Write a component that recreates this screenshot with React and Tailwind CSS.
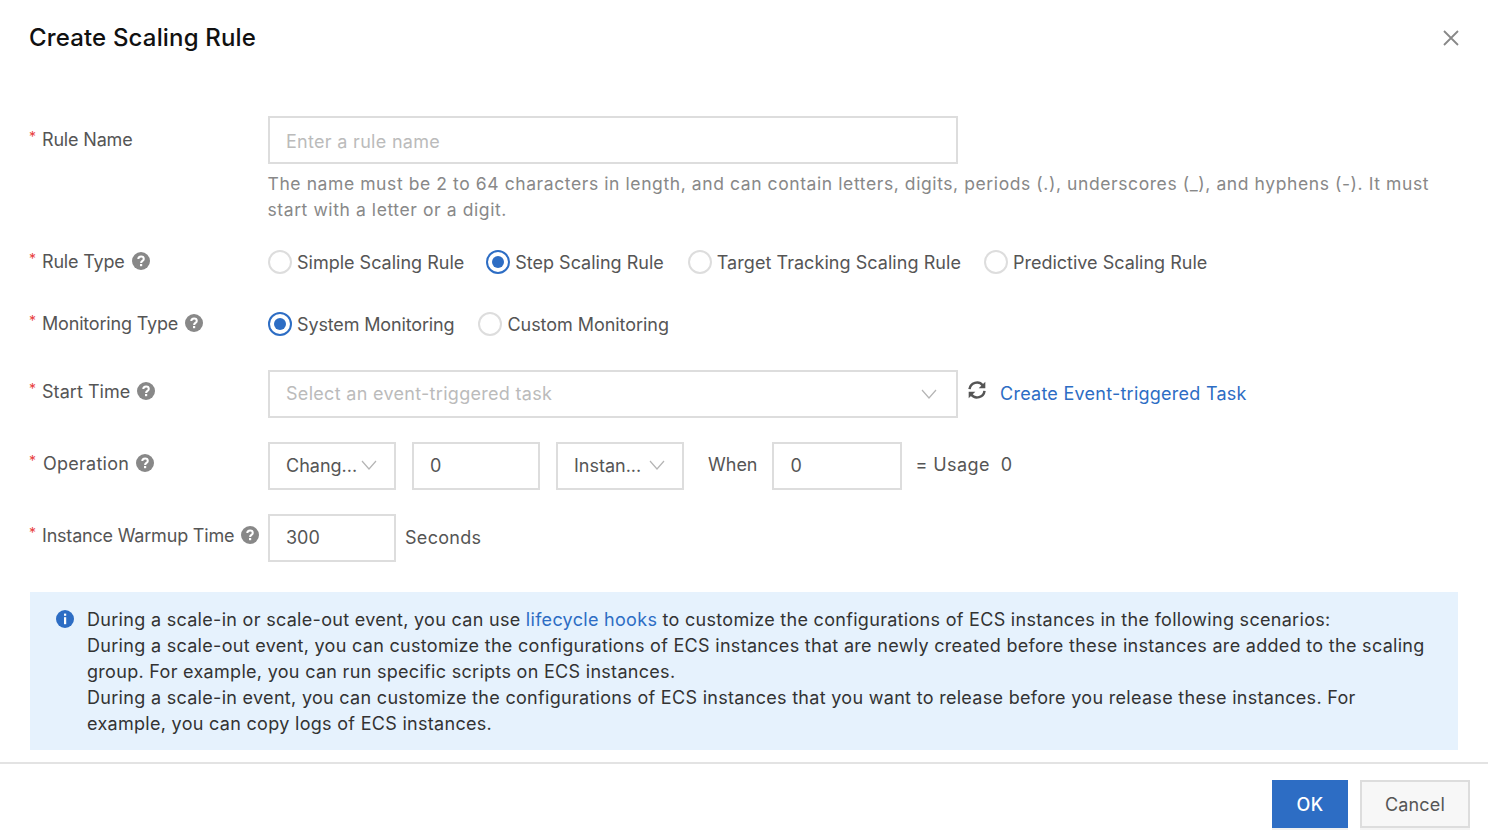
import React from "react";

const font = { fontFamily: '"Inter", "Liberation Sans", sans-serif' };

function Help() {
  return (
    <svg width="18" height="18" viewBox="0 0 18 18" className="ml-[7px] shrink-0">
      <circle cx="9" cy="9" r="9" fill="#888888" />
      <path d="M6.3 7.1 C6.3 5.5 7.5 4.5 9.1 4.5 C10.7 4.5 11.8 5.5 11.8 6.9 C11.8 8.9 9.1 8.9 9.1 10.9" fill="none" stroke="#fff" strokeWidth="2" />
      <rect x="8" y="12" width="2.2" height="2.2" fill="#fff" />
    </svg>
  );
}

function Label({ children, help, wide, high, track = "tracking-[-0.18px]" }) {
  return (
    <div className={"w-[238px] shrink-0 flex items-center h-6 whitespace-nowrap text-[18px] text-[#555555] " + track + " " + (high ? "-mt-[6px]" : "-mt-[2px]")}>
      <span className={"text-[#e84040] text-[14px] -mt-[6px] -ml-[1px] " + (wide ? "w-[14px]" : "w-[13px]")}>*</span>
      <span>{children}</span>
      {help && <Help />}
    </div>
  );
}

function Radio({ checked, children, className = "", track = "tracking-[0px]" }) {
  return (
    <div className={"flex items-center h-6 whitespace-nowrap text-[18px] text-[#555555] " + track + " " + className}>
      {checked ? (
        <span className="w-6 h-6 rounded-full border-2 border-[#2d6dc4] flex items-center justify-center shrink-0 mr-[5px]">
          <span className="w-3 h-3 rounded-full bg-[#2d6dc4]" />
        </span>
      ) : (
        <span className="w-6 h-6 rounded-full border-2 border-[#dddddd] shrink-0 mr-[5px]" />
      )}
      <span>{children}</span>
    </div>
  );
}

function Chevron({ color = "#b5b5b5" }) {
  return (
    <svg width="16" height="10" viewBox="0 0 16 10" className="shrink-0">
      <path d="M1 1 L8 9 L15 1" fill="none" stroke={color} strokeWidth="1.2" />
    </svg>
  );
}

function Box({ children, className = "" }) {
  return (
    <div className={"h-12 border-2 border-[#dddddd] flex items-center shrink-0 text-[18px] " + className}>
      {children}
    </div>
  );
}

export default function App() {
  return (
    <div style={font} className="w-[1488px] h-[840px] bg-white overflow-hidden flex flex-col">
      <div className="h-[76px] pl-[29px] pr-[28px] flex items-center justify-between shrink-0">
        <h1 className="text-[24px] font-medium text-[#111111] tracking-[0.16px]">Create Scaling Rule</h1>
        <svg width="18" height="18" viewBox="0 0 18 18">
          <path d="M2 2 L16 16 M16 2 L2 16" stroke="#888888" strokeWidth="1.8" fill="none" />
        </svg>
      </div>

      <div className="pt-[40px] pl-[30px] pr-[30px] flex flex-col">
        <div className="flex items-start">
          <div className="h-12 flex items-center"><Label>Rule Name</Label></div>
          <div className="flex-1 min-w-0">
            <Box className="w-[690px] px-4 pt-[2px] tracking-[0.3px] text-[#bbbbbb]">Enter a rule name</Box>
            <p className="mt-[7px] -ml-[0.5px] text-[17.5px] leading-[26px] tracking-[0.59px] text-[#888888]">
              The name must be 2 to 64 characters in length, and can contain letters, digits, periods (.), underscores (_), and hyphens (-). It must start with a letter or a digit.
            </p>
          </div>
        </div>

        <div className="flex items-center mt-[27px] h-6">
          <Label help>Rule Type</Label>
          <Radio>Simple Scaling Rule</Radio>
          <Radio checked className="ml-[22px]">Step Scaling Rule</Radio>
          <Radio className="ml-[24px]" track="tracking-[0.05px]">Target Tracking Scaling Rule</Radio>
          <Radio className="ml-[23px]">Predictive Scaling Rule</Radio>
        </div>

        <div className="flex items-center mt-[38px] h-6">
          <Label help>Monitoring Type</Label>
          <Radio checked track="tracking-[-0.14px]">System Monitoring</Radio>
          <Radio className="ml-[24px]" track="tracking-[-0.05px]">Custom Monitoring</Radio>
        </div>

        <div className="flex items-center mt-[34px]">
          <Label help high track="tracking-[0.05px]">Start Time</Label>
          <Box className="w-[690px] pl-4 pr-[19px] pb-[1px] justify-between tracking-[0.3px] text-[#bbbbbb]">
            <span>Select an event-triggered task</span>
            <Chevron />
          </Box>
          <svg width="20" height="20" viewBox="0 0 24 24" className="ml-[9px] -mt-[8px] shrink-0" fill="none" stroke="#555555" strokeWidth="3">
            <path d="M3 11 A9 9 0 0 1 19 6.5" />
            <path d="M21 13 A9 9 0 0 1 5 17.5" />
            <path d="M22 2 V10 H14 Z" fill="#555555" stroke="none" />
            <path d="M2 22 V14 H10 Z" fill="#555555" stroke="none" />
          </svg>
          <a className="ml-[13px] -mt-[2px] text-[18px] tracking-[0.25px] text-[#2d6dc4]">Create Event-triggered Task</a>
        </div>

        <div className="flex items-center mt-[24px]">
          <Label help wide high track="tracking-[0.25px]">Operation</Label>
          <Box className="w-[128px] pl-4 pr-[17px] pb-[2px] justify-between text-[#555555]">
            <span>Chang...</span>
            <Chevron />
          </Box>
          <Box className="w-[128px] ml-4 pl-4 pb-[2px] text-[#555555]">0</Box>
          <Box className="w-[128px] ml-4 pl-4 pr-[17px] pb-[2px] justify-between text-[#555555]">
            <span>Instan...</span>
            <Chevron />
          </Box>
          <span className="ml-6 text-[18px] text-[#555555] -mt-[4px]">When</span>
          <Box className="w-[130px] ml-[14px] pl-[17px] pb-[2px] text-[#555555]">0</Box>
          <span className="ml-[14px] text-[18px] text-[#555555] -mt-[4px] tracking-[0.4px] whitespace-pre">= Usage  0</span>
        </div>

        <div className="flex items-center mt-[24px]">
          <Label help high track="tracking-[-0.2px]">Instance Warmup Time</Label>
          <Box className="w-[128px] pl-4 pb-[2px] text-[#555555]">300</Box>
          <span className="ml-[9px] -mt-[2px] text-[18px] text-[#555555] tracking-[0.3px]">Seconds</span>
        </div>

        <div className="mt-[30px] h-[158px] bg-[#e6f2fd] pl-[26px] pr-[26px] pt-[15px] flex items-start">
          <svg width="18" height="18" viewBox="0 0 18 18" className="mt-[3px] shrink-0">
            <circle cx="9" cy="9" r="9" fill="#2d6dc4" />
            <rect x="8" y="3.6" width="2.2" height="2.2" fill="#fff" />
            <rect x="8" y="7.2" width="2.2" height="7" fill="#fff" />
          </svg>
          <div className="ml-[13px] text-[18px] leading-[26px] tracking-[0.3px] text-[#333333]">
            <p>During a scale-in or scale-out event, you can use <a className="text-[#2d6dc4]">lifecycle hooks</a> to customize the configurations of ECS instances in the following scenarios:</p>
            <p>During a scale-out event, you can customize the configurations of ECS instances that are newly created before these instances are added to the scaling group. For example, you can run specific scripts on ECS instances.</p>
            <p>During a scale-in event, you can customize the configurations of ECS instances that you want to release before you release these instances. For example, you can copy logs of ECS instances.</p>
          </div>
        </div>
      </div>

      <div className="mt-[12px] border-t-2 border-[#e3e3e3] pt-[16px] pr-[18px] flex justify-end gap-3">
        <button className="w-[76px] h-12 bg-[#2d6dc4] text-white text-[18px] tracking-[0.3px] font-medium shadow-[0_2px_0_#f0f0f0]">OK</button>
        <button className="w-[110px] h-12 bg-[#f7f7f7] border-2 border-[#dddddd] text-[#555555] text-[18px] tracking-[0.2px] shadow-[0_2px_0_#f4f4f4]">Cancel</button>
      </div>
    </div>
  );
}
